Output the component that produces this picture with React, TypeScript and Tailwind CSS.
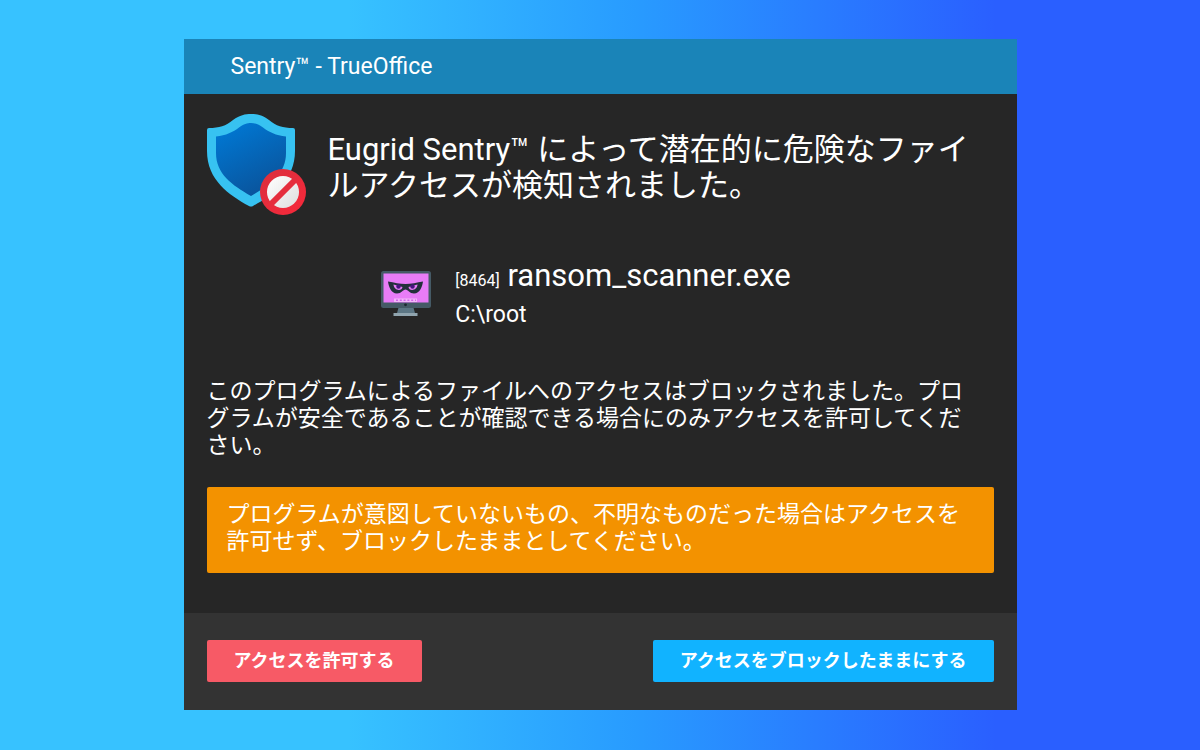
import React from 'react';

const ShieldIcon: React.FC = () => (
  <svg viewBox="0 0 102 104" className="w-[102px] h-[104px] shrink-0" aria-hidden="true">
    <defs>
      <linearGradient id="shield" x1="0.2" y1="0" x2="0.7" y2="1">
        <stop offset="0" stopColor="#0078d4" />
        <stop offset="1" stopColor="#0a5299" />
      </linearGradient>
      <linearGradient id="sign" x1="0" y1="0" x2="1" y2="1">
        <stop offset="0" stopColor="#ffffff" />
        <stop offset="1" stopColor="#dedede" />
      </linearGradient>
      <linearGradient id="ring" x1="0" y1="0" x2="1" y2="1">
        <stop offset="0" stopColor="#d9303e" />
        <stop offset="1" stopColor="#f8283a" />
      </linearGradient>
    </defs>
    <path
      d="M0 16Q0 14 2 14C12 14 19 12 26 6C33 1 38 0 44 0S55 1 62 6C69 12 76 14 86 14Q88 14 88 16V37C88 66 66 81 46 92Q44 93 42 92C22 81 0 66 0 37Z"
      fill="#37c2f1"
    />
    <path
      d="M9 22.500C19 21.500 26 18 32 13.500C37 10 40 9 44 9S51 10 56 13.500C62 18 69 21.500 79 22.500V39C79 60 63 71 44 82C25 71 9 60 9 39Z"
      fill="url(#shield)"
    />
    <circle cx="76" cy="78" r="23" fill="url(#ring)" />
    <circle cx="76" cy="78" r="16" fill="url(#sign)" />
    <path d="M63 91L89 65" stroke="#e52e3d" strokeWidth="6" />
  </svg>
);

const InfectedMonitorIcon: React.FC = () => (
  <svg viewBox="0 0 50 46" className="w-[50px] h-[46px] shrink-0" aria-hidden="true">
    <path d="M18 35H32L34 42H16Z" fill="#5c7684" />
    <rect x="0" y="0" width="50" height="37" rx="2.500" fill="#455a66" />
    <rect x="2.500" y="2.500" width="45" height="29" fill="#e87cf7" />
    <path
      d="M7 10.500C13 11.500 19 13 24.500 13S36 11.500 42 10.500C41.500 15 39 22.500 33 22.500C28.500 22.500 27 18.500 24.500 18.500S20.500 22.500 16 22.500C10 22.500 7.500 15 7 10.500Z"
      fill="#24303b"
    />
    <path d="M12.500 13.500L21.500 16C21 20.500 13 20 12.500 13.500Z" fill="#e87cf7" />
    <path d="M36.500 13.500L27.500 16C28 20.500 36 20 36.500 13.500Z" fill="#e87cf7" />
    <circle cx="17.500" cy="15.500" r="2.200" fill="#45157d" />
    <circle cx="31.500" cy="15.500" r="2.200" fill="#45157d" />
    <rect x="13" y="27.500" width="23" height="3.500" fill="#f3b7fa" />
    <path d="M15 29.300H35" stroke="#d166e8" strokeWidth="1.600" strokeDasharray="2 1.800" />
    <circle cx="24.500" cy="33.800" r="1.400" fill="#1d282f" />
    <rect x="12.500" y="42" width="24" height="3" fill="#90a4ae" />
  </svg>
);

const App: React.FC = () => {
  return (
    <div className="min-h-screen flex items-start justify-center pt-[39px] pb-10 bg-[linear-gradient(90deg,#37c2ff_29%,#289bff_53%,#2a5fff_83%)] text-white font-[Roboto,'Noto_Sans_CJK_JP',sans-serif]">
      <main className="w-full max-w-[833px] bg-[#262626]">
        <header className="bg-[#1a84b8] px-[47px] py-3">
          <h1 className="text-[23px] leading-[31px]">Sentry™ - TrueOffice</h1>
        </header>

        <div className="px-[23px] pt-5 pb-10">
          <div className="flex items-start gap-[19px]">
            <ShieldIcon />
            <h2 className="pt-[18px] text-[31px] leading-[36px]">
              Eugrid Sentry™ によって潜在的に危険なファイルアクセスが検知されました。
            </h2>
          </div>

          <div className="flex items-center justify-center gap-6 mt-10 pr-7">
            <InfectedMonitorIcon />
            <div>
              <p className="text-[31px] leading-[36px]">
                <span className="text-[16px]">[8464]</span> ransom_scanner.exe
              </p>
              <p className="text-[23px] leading-[31px]">C:\root</p>
            </div>
          </div>

          <p className="mt-12 pr-4 text-[23px] leading-[27px]">
            このプログラムによるファイルへのアクセスはブロックされました。プログラムが安全であることが確認できる場合にのみアクセスを許可してください。
          </p>

          <p className="mt-7 px-5 pt-[14px] pb-[18px] rounded-xs bg-[#f39200] text-[23px] leading-[27px]">
            プログラムが意図していないもの、不明なものだった場合はアクセスを許可せず、ブロックしたままとしてください。
          </p>
        </div>

        <footer className="flex flex-wrap justify-between gap-4 bg-[#333333] px-[23px] pt-[27px] pb-7">
          <button type="button" className="rounded-xs bg-[#f75a66] px-[27px] py-2 text-lg leading-[26px] font-bold">
            アクセスを許可する
          </button>
          <button type="button" className="rounded-xs bg-[#11b3ff] px-[27px] py-2 text-lg leading-[26px] font-bold">
            アクセスをブロックしたままにする
          </button>
        </footer>
      </main>
    </div>
  );
};

export default App;
